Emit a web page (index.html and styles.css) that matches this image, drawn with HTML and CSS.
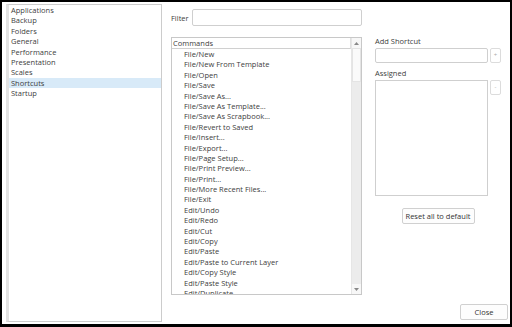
FILE: index.html
```html
<!DOCTYPE html>
<html>
<head>
<meta charset="utf-8">
<link rel="stylesheet" href="styles.css">
</head>
<body>
<div class="frame">
  <ul class="nav">
    <li>Applications</li>
    <li>Backup</li>
    <li>Folders</li>
    <li>General</li>
    <li>Performance</li>
    <li>Presentation</li>
    <li>Scales</li>
    <li class="sel">Shortcuts</li>
    <li>Startup</li>
  </ul>
  <div class="content">
    <div class="columns">
      <div class="mid">
        <div class="filter">
          <span class="flabel">Filter</span>
          <div class="input finput"></div>
        </div>
        <div class="cmdbox">
          <div class="cmdlist">
            <div class="cmdhead">Commands</div>
            <ul class="cmds">
              <li>File/New</li>
              <li>File/New From Template</li>
              <li>File/Open</li>
              <li>File/Save</li>
              <li>File/Save As...</li>
              <li>File/Save As Template...</li>
              <li>File/Save As Scrapbook...</li>
              <li>File/Revert to Saved</li>
              <li>File/Insert...</li>
              <li>File/Export...</li>
              <li>File/Page Setup...</li>
              <li>File/Print Preview...</li>
              <li>File/Print...</li>
              <li>File/More Recent Files...</li>
              <li>File/Exit</li>
              <li>Edit/Undo</li>
              <li>Edit/Redo</li>
              <li>Edit/Cut</li>
              <li>Edit/Copy</li>
              <li>Edit/Paste</li>
              <li>Edit/Paste to Current Layer</li>
              <li>Edit/Copy Style</li>
              <li>Edit/Paste Style</li>
              <li>Edit/Duplicate</li>
            </ul>
          </div>
          <div class="sbar">
            <div class="sarrow"><svg width="5" height="3" viewBox="0 0 5 3"><path d="M0 3 L2.5 0 L5 3 Z" fill="#888"/></svg></div>
            <div class="sthumb"></div>
            <div class="strack"></div>
            <div class="sarrow"><svg width="5" height="3" viewBox="0 0 5 3"><path d="M0 0 L2.5 3 L5 0 Z" fill="#888"/></svg></div>
          </div>
        </div>
      </div>
      <div class="side">
        <div class="slabel">Add Shortcut</div>
        <div class="row">
          <div class="input sinput"></div>
          <div class="sq">+</div>
        </div>
        <div class="slabel assigned">Assigned</div>
        <div class="row">
          <div class="abox"></div>
          <div class="sq">-</div>
        </div>
        <div class="btn reset">Reset all to default</div>
      </div>
    </div>
    <div class="footer">
      <div class="btn close">Close</div>
    </div>
  </div>
</div>
</body>
</html>
```

FILE: styles.css
```css
* { box-sizing: border-box; }
html, body { margin: 0; padding: 0; background: #000; }
body {
  font-family: "Open Sans", "DejaVu Sans", sans-serif;
  font-size: 7.5px;
  color: #404040;
}
ul { list-style: none; margin: 0; padding: 0; }

.frame {
  width: 512px;
  height: 327px;
  border: 2px solid #000;
  border-bottom-width: 3px;
  background: #fff;
  display: flex;
  padding: 2px 2px 0 4px;
}

.nav {
  width: 156px;
  height: 318px;
  border: 1px solid #cccccc;
  border-left: 3px solid #e2e2e2;
  flex: none;
}
.nav li {
  height: 10.4px;
  line-height: 10.4px;
  padding-left: 2px;
  white-space: nowrap;
}
.nav li.sel { background: #d8eaf8; }

.content {
  flex: 1;
  display: flex;
  flex-direction: column;
  padding-left: 9px;
}
.columns {
  display: flex;
  gap: 13px;
}
.mid { width: 191px; padding-top: 5px; }

.filter {
  display: flex;
  align-items: center;
  height: 17px;
}
.flabel { width: 21px; }
.input {
  border: 1px solid #cfcfcf;
  border-radius: 2px;
  background: #fff;
}
.finput { width: 171px; height: 17px; }

.cmdbox {
  margin-top: 11px;
  height: 258px;
  border: 1px solid #c8c8c8;
  display: flex;
}
.cmdlist { flex: 1; overflow: hidden; }
.cmdhead {
  height: 11px;
  line-height: 10px;
  padding-left: 1px;
  border-bottom: 1px solid #d0d0d0;
  border-right: 1px solid #e0e0e0;
}
.cmds li {
  height: 10.4px;
  line-height: 10.4px;
  padding-left: 12px;
  white-space: nowrap;
}
.sbar {
  width: 10px;
  display: flex;
  flex-direction: column;
  background: #f0f0f0;
  border-left: 1px solid #e6e6e6;
}
.sarrow {
  height: 10px;
  display: flex;
  align-items: center;
  justify-content: center;
  background: #f7f7f7;
  flex: none;
}
.sthumb {
  height: 34px;
  background: #fafafa;
  border: 1px solid #e4e4e4;
  flex: none;
}
.strack { flex: 1; background: #ececec; }

.side { width: 126px; padding-top: 32px; }
.slabel { height: 10px; line-height: 10px; margin-bottom: 2px; }
.row { display: flex; gap: 2px; }
.sinput { width: 113px; height: 15px; }
.sq {
  width: 11px;
  height: 15px;
  border: 1px solid #dcdcdc;
  border-radius: 2px;
  text-align: center;
  line-height: 13px;
  color: #aaa;
  font-size: 6px;
}
.assigned { margin-top: 5px; margin-bottom: 2px; }
.abox {
  width: 113px;
  height: 116px;
  border: 1px solid #cfcfcf;
}
.btn {
  border: 1px solid #d0d0d0;
  border-radius: 2px;
  background: #fdfdfd;
  text-align: center;
  color: #333;
}
.reset {
  width: 73px;
  height: 16px;
  line-height: 14px;
  margin: 12px auto 0;
}
.footer {
  display: flex;
  justify-content: flex-end;
  padding-top: 9px;
}
.close {
  width: 48px;
  height: 16px;
  line-height: 14px;
}
```
